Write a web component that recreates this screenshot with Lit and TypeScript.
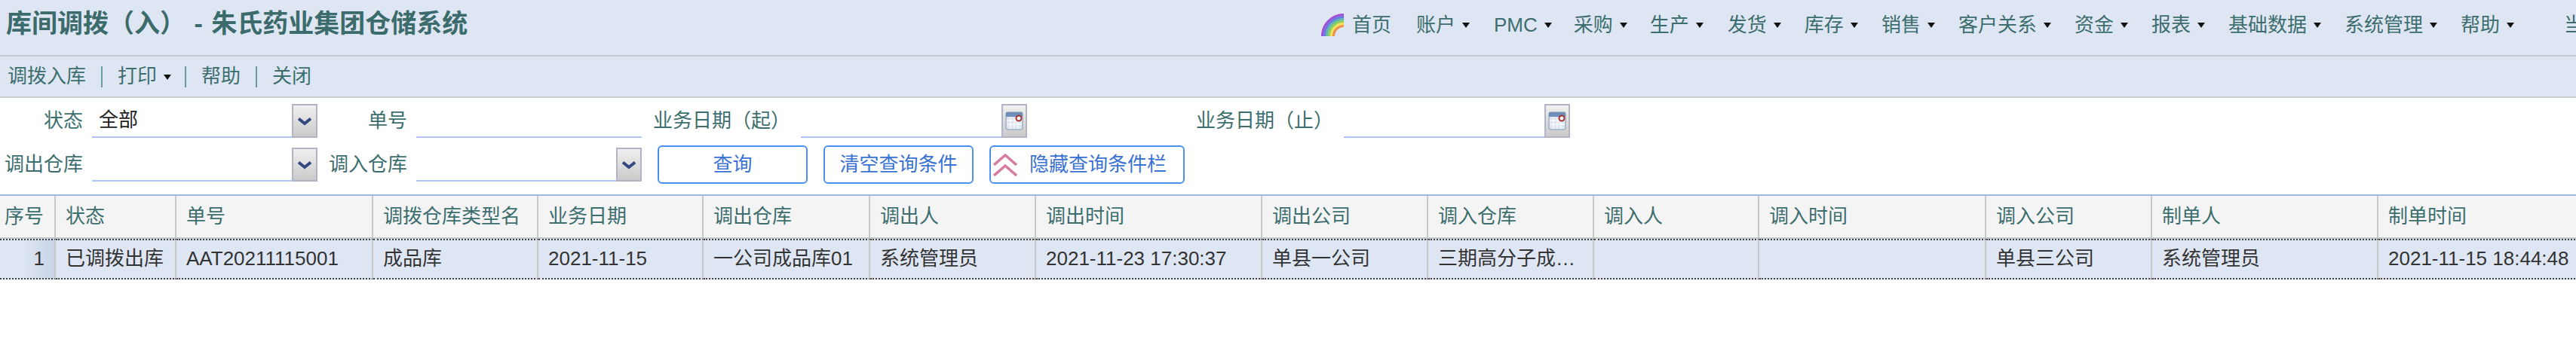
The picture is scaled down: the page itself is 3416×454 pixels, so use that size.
import { LitElement, html, css, svg } from "lit";
import { customElement } from "lit/decorators.js";

const NAV: [string, number][] = [["账户",51],["PMC",48],["采购",49],["生产",51],["发货",50],["库存",50],["销售",50],["客户关系",50],["资金",50],["报表",50],["基础数据",50],["系统管理",50],["帮助",85]];
const COLS: [string, number][] = [
  ["序号",74],["状态",160],["单号",261],["调拨仓库类型名",219],["业务日期",219],["调出仓库",221],["调出人",220],["调出时间",300],["调出公司",220],["调入仓库",220],["调入人",219],["调入时间",301],["调入公司",220],["制单人",300],["制单时间",320],
];
const ROW = ["1","已调拨出库","AAT20211115001","成品库","2021-11-15","一公司成品库01","系统管理员","2021-11-23 17:30:37","单县一公司","三期高分子成品库01","","","单县三公司","系统管理员","2021-11-15 18:44:48"];

const rainbow = html`<svg class="rainbow" width="30" height="32" viewBox="0 0 30 32" fill="none">
  ${[["#a24fd6",28.5],["#6a78e2",25.5],["#5fb8b0",22.5],["#8fd05a",19.5],["#f2e356",16.5],["#ee8f4e",13.5]].map(([c,r]) => svg`<path d="M${30-(r as number)} 32A${r} ${r} 0 0 1 30 ${32-(r as number)}" stroke="${c}" stroke-width="3.2"/>`)}
</svg>`;

const chevron = html`<svg width="20" height="12" viewBox="0 0 20 12"><path d="M2 2.5 10 9l8-6.500" fill="none" stroke="#33487f" stroke-width="4"/></svg>`;

const calendar = html`<svg width="24" height="25" viewBox="0 0 24 25">
  <rect x="1" y="1" width="22" height="23" rx="2" fill="#dfe5ee" stroke="#8097b8"/>
  <rect x="1" y="1" width="22" height="6" fill="#6f8fb8"/>
  <path d="M7 8v15M12 8v15M17 8v15M2 12h20M2 17h20" stroke="#f6f8fb" stroke-width="1.500"/>
  <circle cx="18" cy="9" r="3.500" fill="#fff" stroke="#a83232" stroke-width="2"/>
</svg>`;

const upIcon = html`<svg class="up" width="32" height="30" viewBox="0 0 32 30" fill="none" stroke="#d77ba1" stroke-width="3.500">
  <path d="M1 15 16 2l15 13"/><path d="M1 29 16 16l15 13"/>
</svg>`;

@customElement("app-root")
export class AppRoot extends LitElement {
  static styles = css`
    :host { display: block; width: 3416px; height: 454px; overflow: hidden; background: #fff;
      font: 26px/1.2 "Liberation Sans", "Noto Sans CJK SC", sans-serif; color: #3c6e6e; }
    .head { display: flex; height: 73px; background: #dfe6f3; border-bottom: 2px solid #c5cdd0; white-space: nowrap; }
    .title { flex: none; width: 1744px; padding: 11px 0 0 8px; font-size: 34px; font-weight: 700; line-height: 40px; color: #3b6b6b; word-spacing: 2px; }
    .nav { flex: none; display: flex; align-items: flex-start; padding-top: 16px; }
    .home { display: flex; gap: 11px; margin-right: 33px; }
    .home span, .item span { line-height: 34px; }
    .rainbow { flex: none; }
    .item { display: flex; position: relative; }
    .caret { flex: none; width: 0; height: 0; margin: 14px 0 0 9px; border: 5px solid transparent; border-top: 7px solid #111; border-bottom: 0; }
    .tools { display: flex; align-items: center; height: 53px; padding-left: 10px; background: #dfe6f3; border-bottom: 2px solid #c5cdd0; }
    .sep { width: 2px; height: 28px; background: #6a9c9c; margin: 0 20px; }
    .print { display: flex; align-items: center; margin-right: -2px; }
    .print .caret { margin: 1px 0 0 9px; }
    .filter { display: grid; grid-template-columns: 122px 299px 131px 299px 211px 300px 420px 300px; grid-template-rows: 45px 51px; row-gap: 10px; padding-top: 8px; height: 128px; box-sizing: border-box; }
    .label { padding-right: 12px; text-align: right; align-self: center; white-space: nowrap; }
    .label.date { padding-right: 14px; }
    .field { display: flex; height: 45px; align-self: center; }
    .value { flex: 1; border-bottom: 2px solid #aec5f5; height: 43px; line-height: 42px; padding-left: 9px; color: #222; }
    .btn { flex: none; width: 34px; height: 45px; box-sizing: border-box; border: 2px solid #b3b3c6; background: linear-gradient(#f0f0f0, #cacaca); display: flex; align-items: center; justify-content: center; }
    .actions { grid-column: 5 / -1; display: flex; gap: 21px; padding-left: 21px; }
    .action { height: 51px; box-sizing: border-box; display: flex; align-items: center; justify-content: center; gap: 16px; border: 2px solid #4a90ee; border-radius: 6px; background: #fff; color: #3a72d2; white-space: nowrap; font: inherit; padding: 0; }
    .w1 { width: 199px; }
    .w2 { width: 259px; justify-content: flex-start; padding-left: 3px; }
    .up { flex: none; }
    table { border-collapse: separate; border-spacing: 0; table-layout: fixed; border-top: 2px solid #a0b8e4; }
    th, td { box-sizing: border-box; padding: 0 13px; border-right: 2px solid #c8c8c8; text-align: left; font-weight: 400; overflow: hidden; white-space: nowrap; text-overflow: ellipsis; }
    th { height: 57px; background: #f4f4f4; border-bottom: 2px solid #c5c8c8; color: #3c6e6e; }
    td { height: 54px; background: #dfe6f3; color: #333; border-top: 2px dotted #444; border-bottom: 2px dotted #444; }
    th.no { padding: 0 0 0 6px; }
    td.no { text-align: right; padding-right: 13px; background: linear-gradient(90deg, #dfe6f3 40%, #c7d5e8); }
  `;

  private select(value = "") {
    return html`<div class="field"><div class="value">${value}</div><div class="btn">${chevron}</div></div>`;
  }

  private dateField() {
    return html`<div class="field"><div class="value"></div><div class="btn">${calendar}</div></div>`;
  }

  render() {
    return html`
      <div class="head">
        <div class="title">库间调拨（入） - 朱氏药业集团仓储系统</div>
        <div class="nav">
          <div class="home">${rainbow}<span>首页</span></div>
          ${NAV.map(([t, gap]) => html`<div class="item" style="margin-right:${gap - 19}px"><span>${t}</span><i class="caret"></i></div>`)}
          <div class="item"><span>当</span></div>
        </div>
      </div>
      <div class="tools">
        <span>调拨入库</span><i class="sep"></i>
        <span class="print">打印<i class="caret"></i></span><i class="sep"></i>
        <span>帮助</span><i class="sep"></i>
        <span>关闭</span>
      </div>
      <div class="filter">
        <div class="label">状态</div>${this.select("全部")}
        <div class="label">单号</div><div class="field"><div class="value"></div></div>
        <div class="label date">业务日期（起）</div>${this.dateField()}
        <div class="label date">业务日期（止）</div>${this.dateField()}
        <div class="label">调出仓库</div>${this.select()}
        <div class="label">调入仓库</div>${this.select()}
        <div class="actions">
          <button class="action w1">查询</button>
          <button class="action w1">清空查询条件</button>
          <button class="action w2">${upIcon}隐藏查询条件栏</button>
        </div>
      </div>
      <table style="width:${COLS.reduce((a, c) => a + c[1], 0)}px">
        <colgroup>${COLS.map(([, w]) => html`<col style="width:${w}px" />`)}</colgroup>
        <thead><tr>${COLS.map(([t], i) => html`<th class=${i === 0 ? "no" : ""}>${t}</th>`)}</tr></thead>
        <tbody><tr>${ROW.map((t, i) => html`<td class=${i === 0 ? "no" : ""}>${t}</td>`)}</tr></tbody>
      </table>
    `;
  }
}
